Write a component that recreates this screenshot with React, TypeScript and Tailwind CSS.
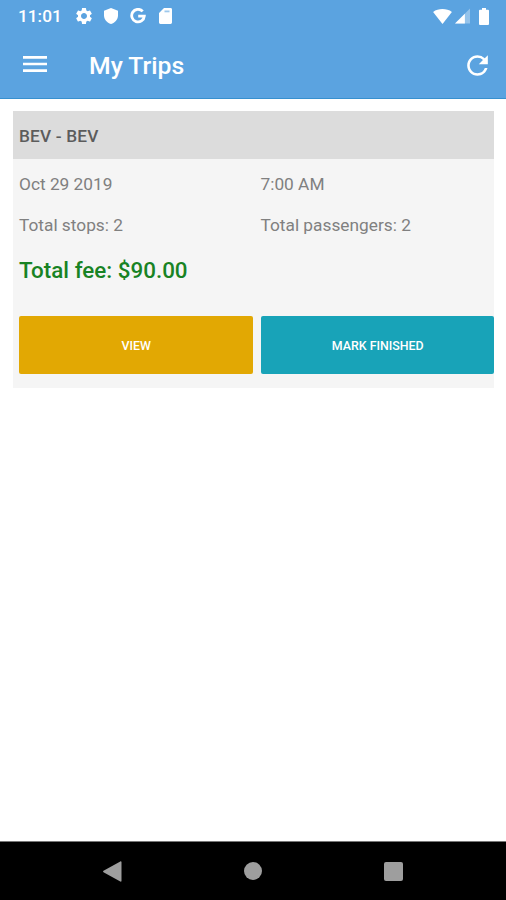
import { MdMenu, MdRefresh, MdSettings } from 'react-icons/md'

const trip = {
  route: 'BEV - BEV',
  date: 'Oct 29 2019',
  time: '7:00 AM',
  stops: 2,
  passengers: 2,
  fee: '$90.00',
}

function StatusBar() {
  return (
    <div className="flex h-8 items-center pl-[18px] pr-[17px] text-white">
      <span className="w-[56px] text-[17.25px] leading-8 font-medium">11:01</span>
      <MdSettings className="size-5" />
      <svg className="ml-[10px] h-4 w-[14px]" viewBox="0 0 14 16" fill="currentColor">
        <path d="M7 0l7 2.7v4.6c0 4-2.9 7.6-7 8.7-4.1-1.1-7-4.7-7-8.7V2.7z" />
      </svg>
      <svg className="ml-3 size-4" viewBox="0 0 16 16" fill="none" stroke="currentColor" strokeWidth="2.8">
        <path d="M12.7 3.4A6.3 6.3 0 1 0 14.3 8.1H8.2" />
      </svg>
      <svg className="ml-[13px] h-4 w-[13px]" viewBox="0 0 13 16" fill="currentColor">
        <path d="M5 0h6.6A1.4 1.4 0 0 1 13 1.4v13.2a1.4 1.4 0 0 1-1.4 1.4H1.4A1.4 1.4 0 0 1 0 14.6V5z" />
        <path d="M5.5 2.5h5v1.8h-5z" fill="#5ba3e0" opacity=".6" />
      </svg>
      <svg className="ml-auto h-[15px] w-[19px]" viewBox="0 0 20 16" fill="currentColor">
        <path d="M0 3.1C2.8 1 6.3 0 10 0s7.2 1 10 3.1L10 16z" />
      </svg>
      <svg className="ml-[3px] h-4 w-[15px]" viewBox="0 0 16 16" fill="currentColor">
        <path d="M16 0v16H0z" opacity=".35" />
        <path d="M10.5 5.5V16H0z" />
      </svg>
      <svg className="ml-[9px] h-[17px] w-[10px]" viewBox="0 0 10 17" fill="currentColor">
        <path d="M3 0h4v1.8h2a1 1 0 0 1 1 1V16a1 1 0 0 1-1 1H1a1 1 0 0 1-1-1V2.8a1 1 0 0 1 1-1h2z" />
      </svg>
    </div>
  )
}

function AppBar() {
  return (
    <div className="flex h-[66px] items-center pl-[19px] pr-[13px] text-white">
      <button aria-label="Menu">
        <MdMenu className="-mt-0.5 size-8" />
      </button>
      <h1 className="ml-[38px] pt-0.5 text-[24.75px] leading-none font-medium">My Trips</h1>
      <button className="ml-auto" aria-label="Refresh">
        <MdRefresh className="size-[31px]" />
      </button>
    </div>
  )
}

function TripCard() {
  return (
    <section className="mr-3 mt-[12px] ml-[13px] h-[277px] bg-[#f5f5f5]">
      <h2 className="h-12 bg-[#dcdcdc] pl-[6px] text-[17.25px] leading-[50px] font-medium tracking-[0.01em] text-[#5c5c5c]">
        {trip.route}
      </h2>
      <div className="grid grid-cols-2 gap-x-2 pl-[6px] text-[17.3px] text-[#808080]">
        <div className="h-[46px] leading-[50px]">{trip.date}</div>
        <div className="h-[46px] leading-[50px]">{trip.time}</div>
        <div className="h-10 leading-[41px]">Total stops: {trip.stops}</div>
        <div className="h-10 leading-[41px]">Total passengers: {trip.passengers}</div>
      </div>
      <div className="h-[71px] pl-[6px] text-[22.4px] leading-[51px] font-medium text-[#188324]">
        Total fee: {trip.fee}
      </div>
      <div className="grid h-[58px] grid-cols-2 gap-x-2 pl-[6px] text-[12.4px] text-white">
        <button className="rounded-xs bg-[#e2a803] pt-0.5 pl-px font-medium">VIEW</button>
        <button className="rounded-xs bg-[#18a3b8] pt-0.5 pl-px font-medium">MARK FINISHED</button>
      </div>
    </section>
  )
}

function NavBar() {
  return (
    <nav className="mt-auto flex h-[59px] items-center border-t border-[#777] bg-black px-[103px] text-[#9e9e9e]">
      <svg className="h-[21px] w-[19px]" viewBox="0 0 19 21" fill="currentColor">
        <path d="M17.3.4c.5-.3 1.2 0 1.2.6v19c0 .6-.7.9-1.2.6L.5 11.2c-.6-.3-.6-1 0-1.4z" />
      </svg>
      <div className="mx-auto size-[18px] rounded-full bg-[#9e9e9e]" />
      <div className="size-[19px] rounded-xs bg-[#9e9e9e]" />
    </nav>
  )
}

export default function App() {
  return (
    <div className="flex h-[900px] w-[506px] flex-col overflow-hidden bg-white font-[Roboto,sans-serif]">
      <header className="h-[99px] border-b border-[#3790cf] bg-[#5ba3e0]">
        <StatusBar />
        <AppBar />
      </header>
      <TripCard />
      <NavBar />
    </div>
  )
}
